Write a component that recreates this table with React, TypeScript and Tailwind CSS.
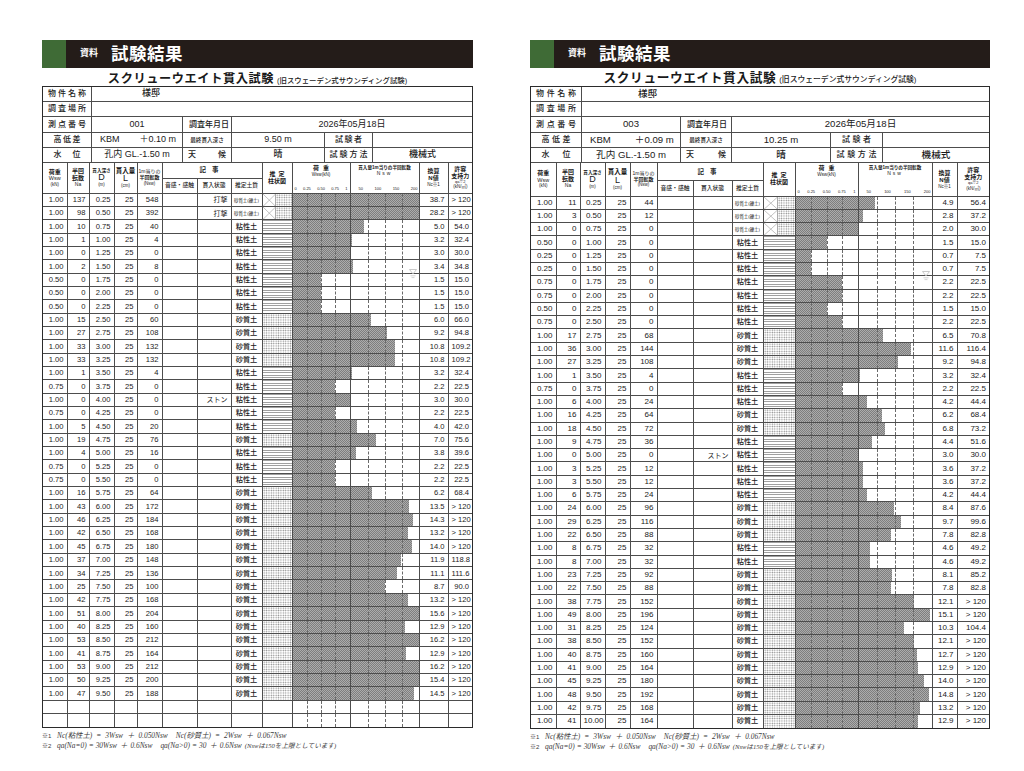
import React from 'react';

type Soil = 'g' | 'c' | 's';
type R = [number, number, number, number, string, Soil, number, number | null];

const leftRows: R[] = [
  [1, 137, 0.25, 548, '打撃', 'g', 38.7, null],
  [1, 98, 0.5, 392, '打撃', 'g', 28.2, null],
  [1, 10, 0.75, 40, '', 'c', 5.0, 54.0],
  [1, 1, 1.0, 4, '', 'c', 3.2, 32.4],
  [1, 0, 1.25, 0, '', 'c', 3.0, 30.0],
  [1, 2, 1.5, 8, '', 'c', 3.4, 34.8],
  [0.5, 0, 1.75, 0, '', 'c', 1.5, 15.0],
  [0.5, 0, 2.0, 0, '', 'c', 1.5, 15.0],
  [0.5, 0, 2.25, 0, '', 'c', 1.5, 15.0],
  [1, 15, 2.5, 60, '', 's', 6.0, 66.0],
  [1, 27, 2.75, 108, '', 's', 9.2, 94.8],
  [1, 33, 3.0, 132, '', 's', 10.8, 109.2],
  [1, 33, 3.25, 132, '', 's', 10.8, 109.2],
  [1, 1, 3.5, 4, '', 'c', 3.2, 32.4],
  [0.75, 0, 3.75, 0, '', 'c', 2.2, 22.5],
  [1, 0, 4.0, 0, 'ストン', 'c', 3.0, 30.0],
  [0.75, 0, 4.25, 0, '', 'c', 2.2, 22.5],
  [1, 5, 4.5, 20, '', 'c', 4.0, 42.0],
  [1, 19, 4.75, 76, '', 's', 7.0, 75.6],
  [1, 4, 5.0, 16, '', 'c', 3.8, 39.6],
  [0.75, 0, 5.25, 0, '', 'c', 2.2, 22.5],
  [0.75, 0, 5.5, 0, '', 'c', 2.2, 22.5],
  [1, 16, 5.75, 64, '', 's', 6.2, 68.4],
  [1, 43, 6.0, 172, '', 's', 13.5, null],
  [1, 46, 6.25, 184, '', 's', 14.3, null],
  [1, 42, 6.5, 168, '', 's', 13.2, null],
  [1, 45, 6.75, 180, '', 's', 14.0, null],
  [1, 37, 7.0, 148, '', 's', 11.9, 118.8],
  [1, 34, 7.25, 136, '', 's', 11.1, 111.6],
  [1, 25, 7.5, 100, '', 's', 8.7, 90.0],
  [1, 42, 7.75, 168, '', 's', 13.2, null],
  [1, 51, 8.0, 204, '', 's', 15.6, null],
  [1, 40, 8.25, 160, '', 's', 12.9, null],
  [1, 53, 8.5, 212, '', 's', 16.2, null],
  [1, 41, 8.75, 164, '', 's', 12.9, null],
  [1, 53, 9.0, 212, '', 's', 16.2, null],
  [1, 50, 9.25, 200, '', 's', 15.4, null],
  [1, 47, 9.5, 188, '', 's', 14.5, null],
];

const rightRows: R[] = [
  [1, 11, 0.25, 44, '', 'g', 4.9, 56.4],
  [1, 3, 0.5, 12, '', 'g', 2.8, 37.2],
  [1, 0, 0.75, 0, '', 'g', 2.0, 30.0],
  [0.5, 0, 1.0, 0, '', 'c', 1.5, 15.0],
  [0.25, 0, 1.25, 0, '', 'c', 0.7, 7.5],
  [0.25, 0, 1.5, 0, '', 'c', 0.7, 7.5],
  [0.75, 0, 1.75, 0, '', 'c', 2.2, 22.5],
  [0.75, 0, 2.0, 0, '', 'c', 2.2, 22.5],
  [0.5, 0, 2.25, 0, '', 'c', 1.5, 15.0],
  [0.75, 0, 2.5, 0, '', 'c', 2.2, 22.5],
  [1, 17, 2.75, 68, '', 's', 6.5, 70.8],
  [1, 36, 3.0, 144, '', 's', 11.6, 116.4],
  [1, 27, 3.25, 108, '', 's', 9.2, 94.8],
  [1, 1, 3.5, 4, '', 'c', 3.2, 32.4],
  [0.75, 0, 3.75, 0, '', 'c', 2.2, 22.5],
  [1, 6, 4.0, 24, '', 'c', 4.2, 44.4],
  [1, 16, 4.25, 64, '', 's', 6.2, 68.4],
  [1, 18, 4.5, 72, '', 's', 6.8, 73.2],
  [1, 9, 4.75, 36, '', 'c', 4.4, 51.6],
  [1, 0, 5.0, 0, 'ストン', 'c', 3.0, 30.0],
  [1, 3, 5.25, 12, '', 'c', 3.6, 37.2],
  [1, 3, 5.5, 12, '', 'c', 3.6, 37.2],
  [1, 6, 5.75, 24, '', 'c', 4.2, 44.4],
  [1, 24, 6.0, 96, '', 's', 8.4, 87.6],
  [1, 29, 6.25, 116, '', 's', 9.7, 99.6],
  [1, 22, 6.5, 88, '', 's', 7.8, 82.8],
  [1, 8, 6.75, 32, '', 'c', 4.6, 49.2],
  [1, 8, 7.0, 32, '', 'c', 4.6, 49.2],
  [1, 23, 7.25, 92, '', 's', 8.1, 85.2],
  [1, 22, 7.5, 88, '', 's', 7.8, 82.8],
  [1, 38, 7.75, 152, '', 's', 12.1, null],
  [1, 49, 8.0, 196, '', 's', 15.1, null],
  [1, 31, 8.25, 124, '', 's', 10.3, 104.4],
  [1, 38, 8.5, 152, '', 's', 12.1, null],
  [1, 40, 8.75, 160, '', 's', 12.7, null],
  [1, 41, 9.0, 164, '', 's', 12.9, null],
  [1, 45, 9.25, 180, '', 's', 14.0, null],
  [1, 48, 9.5, 192, '', 's', 14.8, null],
  [1, 42, 9.75, 168, '', 's', 13.2, null],
  [1, 41, 10.0, 164, '', 's', 12.9, null],
];

type Cfg = {
  w: string;
  info: string[];
  cols: string[];
  headTop: string;
  headBot: string;
  chartH: string;
  rowH: string;
  fs: string;
  namePad: string;
  kbmGap: string;
  lab4: string;
  lab3: string;
  lab5: string;
  title: string;
  sub: string;
  val: string;
};

const L: Cfg = {
  w: 'w-[431px]',
  info: ['w-[49px]', 'w-[91px]', 'w-[49px]', 'w-[93px]', 'w-[48px]'],
  cols: ['w-[24px]', 'w-[22px]', 'w-[25px]', 'w-[23px]', 'w-[25px]', 'w-[35px]', 'w-[34px]', 'w-[31px]', 'w-[30px]', 'w-[58px]', 'w-[69px]', 'w-[29px]'],
  headTop: 'h-[15px]',
  headBot: 'h-[15px]',
  chartH: 'h-[29px]',
  rowH: 'h-[13.35px]',
  fs: 'text-[7.6px]',
  namePad: 'pl-[50px]',
  kbmGap: 'ml-[20px]',
  lab4: 'w-[38px]',
  lab3: 'w-[27px]',
  lab5: 'w-[36px]',
  title: 'text-[12.2px]',
  sub: 'text-[7.4px]',
  val: 'text-[9px]',
};

const Rt: Cfg = {
  w: 'w-[460px]',
  info: ['w-[51px]', 'w-[99px]', 'w-[51px]', 'w-[99px]', 'w-[52px]'],
  cols: ['w-[25px]', 'w-[24px]', 'w-[25px]', 'w-[25px]', 'w-[27px]', 'w-[36px]', 'w-[39px]', 'w-[31px]', 'w-[32px]', 'w-[63px]', 'w-[74px]', 'w-[25px]'],
  headTop: 'h-[17px]',
  headBot: 'h-[16px]',
  chartH: 'h-[32px]',
  rowH: 'h-[13.3px]',
  fs: 'text-[8px]',
  namePad: 'pl-[56px]',
  kbmGap: 'ml-[24px]',
  lab4: 'w-[40px]',
  lab3: 'w-[29px]',
  lab5: 'w-[38px]',
  title: 'text-[12.7px]',
  sub: 'text-[7.8px]',
  val: 'text-[9.6px]',
};

const BAR = 'bg-[#979797] bg-[conic-gradient(#7e7e7e_25%,#acacac_0_50%,#7e7e7e_0_75%,#acacac_0)] bg-size-[2px_2px]';
const DOTS = 'bg-[radial-gradient(circle,#8c8c8c_0.6px,transparent_0.9px)] bg-size-[2.4px_2.4px]';
const LINES = 'bg-[repeating-linear-gradient(to_bottom,#a0a0a0_0_1px,#ffffff_1px_2.6px)]';

const bd = 'border border-[#4d4d4d]';
const td = `${bd} px-[3px] text-right align-middle leading-none whitespace-nowrap`;
const th = `${bd} p-0 font-normal text-center align-middle leading-[1.15]`;
const serif = "italic font-['Liberation_Serif','Noto_Sans_CJK_JP',serif]";

function Spread({ w, text, cls = '' }: { w: string; text: string; cls?: string }) {
  return (
    <div className={`flex justify-between ${w} ${cls}`}>
      {text.split('').map((c, i) => (
        <span key={i}>{c}</span>
      ))}
    </div>
  );
}

function Grid() {
  return (
    <>
      <div className="absolute top-0 bottom-0 left-1/4 border-l border-dashed border-[#6a6a6a]" />
      <div className="absolute top-0 bottom-0 left-1/2 border-l border-dashed border-[#6a6a6a]" />
      <div className="absolute top-0 bottom-0 left-3/4 border-l border-dashed border-[#6a6a6a]" />
    </>
  );
}

function WaterMark() {
  return (
    <svg className="absolute right-[1px] bottom-[-6px] z-10" width="10" height="11" viewBox="0 0 10 11">
      <path d="M1.5 1.5 H8.5 L5 6 Z" fill="none" stroke="#bdbdbd" strokeWidth="0.8" />
      <line x1="2.5" y1="7.8" x2="7.5" y2="7.8" stroke="#c8c8c8" strokeWidth="0.8" />
      <line x1="3.5" y1="9.6" x2="6.5" y2="9.6" stroke="#c8c8c8" strokeWidth="0.8" />
    </svg>
  );
}

function Column({ soil }: { soil: Soil }) {
  if (soil === 'c') return <div className={`absolute inset-0 ${LINES}`} />;
  if (soil === 's') return <div className={`absolute inset-0 ${DOTS}`} />;
  return (
    <div className="absolute inset-0 flex">
      <svg className="w-[47%] h-full border-r border-[#aaa]" viewBox="0 0 10 10" preserveAspectRatio="none">
        <line x1="0" y1="0" x2="10" y2="10" stroke="#9a9a9a" strokeWidth="0.6" vectorEffect="non-scaling-stroke" />
        <line x1="10" y1="0" x2="0" y2="10" stroke="#9a9a9a" strokeWidth="0.6" vectorEffect="non-scaling-stroke" />
      </svg>
      <div className={`flex-1 ${DOTS}`} />
    </div>
  );
}

function Page({ cfg, no, kbm, depth, rows, blank }: { cfg: Cfg; no: string; kbm: string; depth: string; rows: R[]; blank: number }) {
  const info = cfg.info;
  const lab = 'flex items-center justify-center border-r border-[#4d4d4d] text-[8px] font-medium';
  const all: (R | null)[] = [...rows, ...Array.from({ length: blank }, () => null)];
  return (
    <div className={`${cfg.w} shrink-0`}>
      <div className="flex h-[28px]">
        <div className="w-[24px] bg-[#3f6b36]" />
        <div className="flex-1 bg-[#241c19] flex items-center pl-[14px] text-white font-bold">
          <span className="text-[9px]">資料</span>
          <span className="text-[17.5px] ml-[13px] tracking-[0.5px]">試験結果</span>
        </div>
      </div>
      <div className="h-[18px] flex items-end justify-center pb-[1px] font-bold text-[#1a1a1a]">
        <span className={`${cfg.title} tracking-[0.6px] leading-none`}>スクリューウエイト貫入試験</span>
        <span className={`${cfg.sub} leading-none ml-[3px] mb-[1px] font-medium`}>(旧スウェーデン式サウンディング試験)</span>
      </div>
      <div className="border-[1.5px] border-[#2b2b2b] text-[#1a1a1a]">
        <div className="flex h-[15px] border-b border-[#4d4d4d]">
          <div className={`${info[0]} ${lab}`}><Spread w={cfg.lab4} text="物件名称" /></div>
          <div className={`flex-1 flex items-center ${cfg.namePad} ${cfg.val} font-medium`}>様邸</div>
        </div>
        <div className="flex h-[15px] border-b border-[#4d4d4d]">
          <div className={`${info[0]} ${lab}`}><Spread w={cfg.lab4} text="調査場所" /></div>
          <div className="flex-1" />
        </div>
        <div className={`flex h-[16px] border-b border-[#4d4d4d] ${cfg.val}`}>
          <div className={`${info[0]} ${lab}`}><Spread w={cfg.lab4} text="測点番号" /></div>
          <div className={`${info[1]} flex items-center justify-center border-r border-[#4d4d4d]`}>{no}</div>
          <div className={`${info[2]} ${lab}`}><Spread w={cfg.lab5} text="調査年月日" /></div>
          <div className="flex-1 flex items-center justify-center">2026年05月18日</div>
        </div>
        <div className={`flex h-[15px] border-b border-[#4d4d4d] ${cfg.val}`}>
          <div className={`${info[0]} ${lab}`}><Spread w={cfg.lab3} text="高低差" /></div>
          <div className={`${info[1]} flex items-center pl-[8px] border-r border-[#4d4d4d]`}>
            <span>KBM</span>
            <span className={cfg.kbmGap}>{kbm}</span>
          </div>
          <div className={`${info[2]} flex items-center justify-center border-r border-[#4d4d4d] text-[5.6px] font-medium`}>最終貫入深さ</div>
          <div className={`${info[3]} flex items-center justify-center border-r border-[#4d4d4d]`}>{depth}</div>
          <div className={`${info[4]} ${lab}`}><Spread w={cfg.lab3} text="試験者" /></div>
          <div className="flex-1" />
        </div>
        <div className={`flex h-[15px] border-b border-[#4d4d4d] ${cfg.val}`}>
          <div className={`${info[0]} ${lab}`}><Spread w={cfg.lab3} text="水位" /></div>
          <div className={`${info[1]} flex items-center justify-center border-r border-[#4d4d4d]`}>孔内 GL.-1.50 m</div>
          <div className={`${info[2]} ${lab}`}><Spread w={cfg.lab4} text="天候" /></div>
          <div className={`${info[3]} flex items-center justify-center border-r border-[#4d4d4d] font-medium`}>晴</div>
          <div className={`${info[4]} ${lab}`}><Spread w={cfg.lab4} text="試験方法" /></div>
          <div className="flex-1 flex items-center justify-center font-medium">機械式</div>
        </div>
        <table className={`w-full table-fixed border-collapse border-hidden ${cfg.fs}`}>
          <colgroup>
            {cfg.cols.map((c, i) => (
              <col key={i} className={c} />
            ))}
            <col />
          </colgroup>
          <thead>
            <tr className={cfg.headTop}>
              <th rowSpan={2} className={th}>
                <div className="text-[6px] font-bold">荷重</div>
                <div className="text-[5.5px]">Wsw</div>
                <div className="text-[4.5px]">(kN)</div>
              </th>
              <th rowSpan={2} className={th}>
                <div className="text-[6px] font-bold">半回</div>
                <div className="text-[6px] font-bold">転数</div>
                <div className="text-[5px]">Na</div>
              </th>
              <th rowSpan={2} className={th}>
                <div className="text-[4.6px] font-bold">貫入深さ</div>
                <div className="text-[9px] leading-[1]">D</div>
                <div className="text-[4.5px]">(m)</div>
              </th>
              <th rowSpan={2} className={th}>
                <div className="text-[6.5px] font-bold">貫入量</div>
                <div className="text-[9px] leading-[1]">L</div>
                <div className="text-[4.5px]">(cm)</div>
              </th>
              <th rowSpan={2} className={th}>
                <div className="text-[5px]">1m当りの</div>
                <div className="text-[5px] font-bold">半回転数</div>
                <div className="text-[4.5px]">(Nsw)</div>
              </th>
              <th colSpan={3} className={th}>
                <span className="text-[6.5px] font-bold tracking-[6px]">記事</span>
              </th>
              <th rowSpan={2} className={th}>
                <div className="text-[6px] font-bold tracking-[3px] pl-[3px]">推定</div>
                <div className="text-[6px] font-bold">柱状図</div>
              </th>
              <th rowSpan={2} className={th}>
                <div className={`${cfg.chartH} flex flex-col items-stretch pt-[2px]`}>
                  <div className="text-[6px] font-bold tracking-[4px] pl-[4px]">荷重</div>
                  <div className="text-[4.6px]">Wsw(kN)</div>
                  <div className="mt-auto flex justify-between text-[4px] px-[2px] pb-[1px]">
                    <span>0</span><span>0.25</span><span>0.50</span><span>0.75</span><span>1</span>
                  </div>
                </div>
              </th>
              <th rowSpan={2} className={th}>
                <div className={`${cfg.chartH} flex flex-col items-stretch pt-[2px]`}>
                  <div className="text-[4.6px] font-bold whitespace-nowrap">貫入量1m当りの半回転数</div>
                  <div className="text-[5px] tracking-[2px]">Nsw</div>
                  <div className="mt-auto flex justify-between text-[4px] pl-[8px] pr-[1px] pb-[1px]">
                    <span>50</span><span>100</span><span>150</span><span>200</span>
                  </div>
                </div>
              </th>
              <th rowSpan={2} className={th}>
                <div className="text-[6px] font-bold">換算</div>
                <div className="text-[6px] font-bold">N値</div>
                <div className="text-[4.5px]">Nc※1</div>
              </th>
              <th rowSpan={2} className={th}>
                <div className="text-[6px] font-bold">許容</div>
                <div className="text-[6px] font-bold">支持力</div>
                <div className="text-[4px]">qa※2</div>
                <div className="text-[4.5px]">(kN/㎡)</div>
              </th>
            </tr>
            <tr className={cfg.headBot}>
              <th className={th}><span className="text-[5.8px] font-medium whitespace-nowrap">音感・感触</span></th>
              <th className={th}><span className="text-[5.8px] font-medium">貫入状態</span></th>
              <th className={th}><span className="text-[5.8px] font-medium">推定土質</span></th>
            </tr>
          </thead>
          <tbody>
            {all.map((r, i) => {
              if (!r) {
                return (
                  <tr key={i} className={cfg.rowH}>
                    {Array.from({ length: 9 }, (_, k) => (
                      <td key={k} className={td} />
                    ))}
                    <td className={`${bd} relative p-0`}><Grid /></td>
                    <td className={`${bd} relative p-0`}><Grid /></td>
                    <td className={td} />
                    <td className={td} />
                  </tr>
                );
              }
              const [wsw, na, d, nsw, state, soil, nc, qa] = r;
              const nPct = wsw >= 1 ? Math.min(nsw, 200) / 2 : 0;
              return (
                <tr key={i} className={cfg.rowH}>
                  <td className={td}>{wsw.toFixed(2)}</td>
                  <td className={td}>{na}</td>
                  <td className={td}>{d.toFixed(2)}</td>
                  <td className={td}>25</td>
                  <td className={td}>{nsw}</td>
                  <td className={td} />
                  <td className={`${td} text-center text-[7px]`}>{state}</td>
                  <td className={`${bd} p-0 text-center align-middle leading-none whitespace-nowrap overflow-hidden`}>
                    {soil === 'g' ? (
                      <span className="text-[4.4px]">砂質土(礫土)</span>
                    ) : (
                      <span className="text-[7.2px] font-medium">{soil === 'c' ? '粘性土' : '砂質土'}</span>
                    )}
                  </td>
                  <td className={`${bd} relative p-0`}><Column soil={soil} /></td>
                  <td className={`${bd} relative p-0`}>
                    <div className={`absolute top-0 bottom-0 left-0 ${BAR}`} style={{ width: `${wsw * 100}%` }} />
                    <Grid />
                  </td>
                  <td className={`${bd} relative p-0`}>
                    {nPct > 0 && <div className={`absolute top-0 bottom-0 left-0 ${BAR}`} style={{ width: `${nPct}%` }} />}
                    <Grid />
                    {i === 5 && <WaterMark />}
                  </td>
                  <td className={td}>{nc.toFixed(1)}</td>
                  <td className={td}>{qa === null ? '> 120' : qa.toFixed(1)}</td>
                </tr>
              );
            })}
          </tbody>
        </table>
      </div>
      <div className="mt-[3px] text-[7.4px] leading-[10px] text-[#3a3a3a] whitespace-nowrap">
        <div className="flex items-baseline">
          <span className="w-[15px] text-[6px] not-italic">※1</span>
          <span className={serif}>Nc(粘性土)</span>
          <span className={`${serif} mx-[4px]`}>=</span>
          <span className={serif}>3Wsw</span>
          <span className={`${serif} mx-[4px]`}>＋</span>
          <span className={serif}>0.050Nsw</span>
          <span className={`${serif} ml-[8px]`}>Nc(砂質土)</span>
          <span className={`${serif} mx-[4px]`}>=</span>
          <span className={serif}>2Wsw</span>
          <span className={`${serif} mx-[4px]`}>＋</span>
          <span className={serif}>0.067Nsw</span>
        </div>
        <div className="flex items-baseline">
          <span className="w-[15px] text-[6px]">※2</span>
          <span className={serif}>qa(Na=0)</span>
          <span className={`${serif} mx-[2px]`}>=</span>
          <span className={serif}>30Wsw</span>
          <span className={`${serif} mx-[3px]`}>＋</span>
          <span className={serif}>0.6Nsw</span>
          <span className={`${serif} ml-[8px]`}>qa(Na&gt;0)</span>
          <span className={`${serif} mx-[2px]`}>=</span>
          <span className={serif}>30</span>
          <span className={`${serif} mx-[3px]`}>＋</span>
          <span className={serif}>0.6Nsw</span>
          <span className={`${serif} ml-[3px] text-[6.6px]`}>(Nswは150を上限としています)</span>
        </div>
      </div>
    </div>
  );
}

export default function App() {
  return (
    <div className="w-[1024px] h-[771px] bg-white overflow-hidden flex items-start pt-[40px] pl-[42px] gap-[57px] text-[#1a1a1a] font-['Liberation_Sans','Noto_Sans_CJK_JP',sans-serif]">
      <Page cfg={L} no="001" kbm="＋0.10 m" depth="9.50 m" rows={leftRows} blank={2} />
      <Page cfg={Rt} no="003" kbm="＋0.09 m" depth="10.25 m" rows={rightRows} blank={0} />
    </div>
  );
}
